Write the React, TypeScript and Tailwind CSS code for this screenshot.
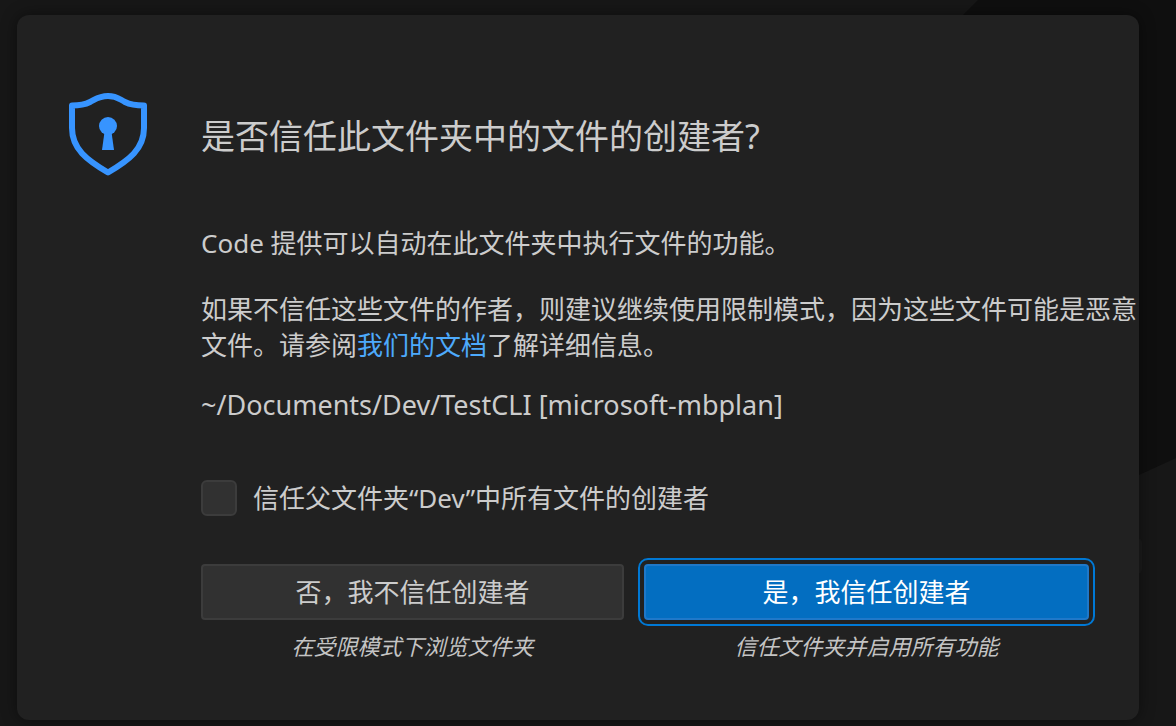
import React, { useState } from 'react';

interface ChoiceProps {
  label: string;
  hint: string;
  primary?: boolean;
  onClick: () => void;
}

const ShieldIcon: React.FC = () => (
  <svg className="w-20 h-[84px] shrink-0" viewBox="0 0 80 84" fill="none" aria-hidden="true">
    <path
      d="M4 13.5 C11 13.5 17 12.5 22 10 C28 7 31 4 40 4 C49 4 51 7 57 10 C62 12.5 68 13.5 76 13.5 V36 C76 57 61 68 40 80.5 C19 68 4 57 4 36 Z"
      stroke="#3794ff"
      strokeWidth="6"
      strokeLinejoin="round"
    />
    <circle cx="40" cy="34" r="9" fill="#3794ff" />
    <path d="M36.5 40 H43.5 L46 58 H34 Z" fill="#3794ff" />
  </svg>
);

const Backdrop: React.FC = () => (
  <svg
    className="absolute inset-0 w-full h-full"
    viewBox="0 0 1176 726"
    preserveAspectRatio="none"
    aria-hidden="true"
  >
    <path d="M978 0 H1176 V458 L1100 493 L900 78 Z" fill="#0f0f0f" />
    <rect x="1100" y="538" width="42" height="36" rx="5" fill="#1c1c1c" />
  </svg>
);

const Choice: React.FC<ChoiceProps> = ({ label, hint, primary, onClick }) => (
  <div className="flex-auto flex flex-col">
    <button
      type="button"
      onClick={onClick}
      className={
        primary
          ? 'h-14 rounded-sm border-2 border-[#1f78c9] bg-[#036ec1] text-white outline-2 outline-offset-4 outline-[#0078d4]'
          : 'h-14 rounded-sm border-2 border-[#3c3c3c] bg-[#313131] text-[#cccccc]'
      }
    >
      {label}
    </button>
    <p className="mt-[10px] text-center text-[22px] leading-8 italic text-[#c4c4c4]">{hint}</p>
  </div>
);

const App: React.FC = () => {
  const [trustParent, setTrustParent] = useState(false);
  const [, setTrusted] = useState<boolean | null>(null);

  return (
    <div className="relative min-h-screen overflow-hidden bg-[#171717] pt-[15px] pr-[37px] pb-[5px] pl-[17px] font-['Noto_Sans','Noto_Sans_CJK_SC',sans-serif] text-[26px] leading-9 text-[#cccccc]">
      <Backdrop />

      <div
        role="dialog"
        aria-labelledby="trust-title"
        className="relative flex gap-[53px] rounded-xl bg-[#212121] pt-[77px] pb-[58px] pl-[51px] shadow-[0_0_16px_rgba(0,0,0,0.45)]"
      >
        <ShieldIcon />

        <div className="flex-1 min-w-0">
          <h1 id="trust-title" className="pt-5 text-[34px] leading-[48px]">
            是否信任此文件夹中的文件的创建者?
          </h1>

          {/* 说明文字 */}
          <p className="mt-[65px]">Code 提供可以自动在此文件夹中执行文件的功能。</p>
          <p className="mt-[30px]">
            如果不信任这些文件的作者，则建议继续使用限制模式，因为这些文件可能是恶意文件。请参阅
            <a href="#docs" className="text-[#4daafc]">我们的文档</a>
            了解详细信息。
          </p>
          <p className="mt-6 text-[27px] leading-9">~/Documents/Dev/TestCLI [microsoft-mbplan]</p>

          <div className="mt-[57px] flex items-center gap-4">
            <input
              id="trust-parent"
              type="checkbox"
              className="size-9 shrink-0 appearance-none rounded-md border-2 border-[#3c3c3c] bg-[#313131] checked:bg-[#0078d4]"
              checked={trustParent}
              onChange={(e) => setTrustParent(e.target.checked)}
            />
            <label htmlFor="trust-parent">信任父文件夹“Dev”中所有文件的创建者</label>
          </div>

          {/* 操作按钮 */}
          <div className="mt-12 mr-[50px] flex gap-5">
            <Choice label="否，我不信任创建者" hint="在受限模式下浏览文件夹" onClick={() => setTrusted(false)} />
            <Choice label="是，我信任创建者" hint="信任文件夹并启用所有功能" primary onClick={() => setTrusted(true)} />
          </div>
        </div>
      </div>
    </div>
  );
};

export default App;
